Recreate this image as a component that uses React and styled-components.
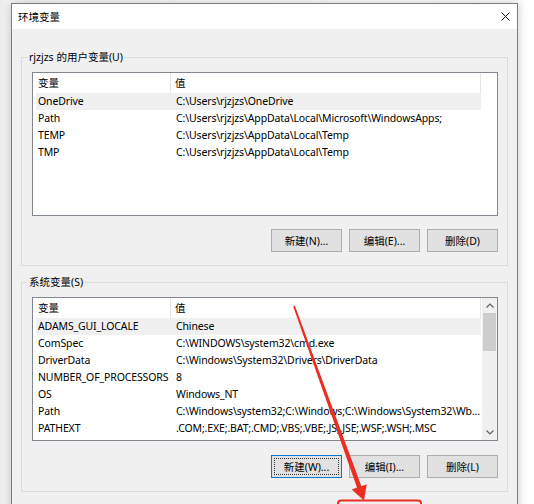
import styled, { createGlobalStyle } from 'styled-components';

const GlobalStyle = createGlobalStyle`
  html, body {
    margin: 0;
    padding: 0;
    background: #f7f7f7;
  }
  body {
    font-family: "Noto Sans", "Noto Sans CJK SC", sans-serif;
    font-size: 10.5px;
    color: #000;
  }
`;

const Page = styled.div`
  position: relative;
  width: 534px;
  height: 504px;
  overflow: hidden;
  background: linear-gradient(90deg, #ececec 0, #f6f6f6 11px, #fff 100%);
`;

const Window = styled.div`
  margin: 3px 0 0 11px;
  width: 507px;
  min-height: 520px;
  box-sizing: border-box;
  border: 1px solid #7d7d7d;
  background: #f0f0f0;
  box-shadow: 0 0 9px rgba(0, 0, 0, 0.22);
`;

const TitleBar = styled.div`
  height: 25px;
  background: #fff;
  display: flex;
  align-items: center;
  justify-content: space-between;
  padding: 0 7px 0 6px;
  font-size: 10.5px;
`;

const CloseIcon = styled.svg`
  width: 9px;
  height: 9px;
`;

const Body = styled.div`
  padding: 20px 9px 0 9px;
  display: flex;
  flex-direction: column;
  gap: 8px;
`;

const Group = styled.fieldset`
  margin: 0;
  padding: 7px 9px 13px 10px;
  border: 1px solid #dcdcdc;
  min-width: 0;
  display: flex;
  flex-direction: column;
  gap: ${(p) => p.$gap || 13}px;
`;

const Legend = styled.legend`
  padding: 0 2px;
  margin-left: -5px;
  line-height: 16px;
  font-size: 10.5px;
`;

const List = styled.div`
  height: 144px;
  box-sizing: border-box;
  border: 1px solid #828790;
  background: #fff;
  display: flex;
  overflow: hidden;
`;

const ListContent = styled.div`
  flex: 1;
  min-width: 0;
`;

const HeaderRow = styled.div`
  display: grid;
  grid-template-columns: 138px 310px 1fr;
  height: 20px;
`;

const HeaderCell = styled.div`
  padding-left: ${(p) => p.$pad}px;
  line-height: 21px;
  border-right: ${(p) => (p.$last ? 'none' : '1px solid #e5e5e5')};
`;

const Row = styled.div`
  display: grid;
  grid-template-columns: 135px 310px;
  margin-left: 3px;
  width: 445px;
  height: 17px;
  line-height: 17px;
  background: ${(p) => (p.$selected ? '#f0f0f0' : 'transparent')};
`;

const Cell = styled.div`
  padding-left: ${(p) => p.$pad}px;
  white-space: nowrap;
  overflow: hidden;
  text-overflow: ellipsis;
  letter-spacing: -0.13px;
`;

const ScrollBar = styled.div`
  width: 15px;
  flex: none;
  background: #f0f0f0;
  display: flex;
  flex-direction: column;
`;

const ScrollArrow = styled.div`
  height: 15px;
  display: flex;
  align-items: center;
  justify-content: center;
`;

const ScrollTrack = styled.div`
  flex: 1;
  display: flex;
  flex-direction: column;
`;

const Thumb = styled.div`
  height: 38px;
  background: #cdcdcd;
  margin: 0 1px;
`;

const ButtonRow = styled.div`
  display: flex;
  justify-content: flex-end;
  gap: 7px;
`;

const Button = styled.button`
  width: 71px;
  height: 23px;
  box-sizing: border-box;
  padding: 0;
  font-family: inherit;
  font-size: 10.5px;
  color: #000;
  background: #e1e1e1;
  border: 1px solid ${(p) => (p.$focused ? '#0078d7' : '#adadad')};
  outline: ${(p) => (p.$focused ? '1px dotted #333' : 'none')};
  outline-offset: -4px;
`;

const Annotation = styled.svg`
  position: absolute;
  left: 0;
  top: 0;
  width: 534px;
  height: 504px;
  pointer-events: none;
`;

const userVars = [
  ['OneDrive', 'C:\\Users\\rjzjzs\\OneDrive'],
  ['Path', 'C:\\Users\\rjzjzs\\AppData\\Local\\Microsoft\\WindowsApps;'],
  ['TEMP', 'C:\\Users\\rjzjzs\\AppData\\Local\\Temp'],
  ['TMP', 'C:\\Users\\rjzjzs\\AppData\\Local\\Temp'],
];

const systemVars = [
  ['ADAMS_GUI_LOCALE', 'Chinese'],
  ['ComSpec', 'C:\\WINDOWS\\system32\\cmd.exe'],
  ['DriverData', 'C:\\Windows\\System32\\Drivers\\DriverData'],
  ['NUMBER_OF_PROCESSORS', '8'],
  ['OS', 'Windows_NT'],
  ['Path', 'C:\\Windows\\system32;C:\\Windows;C:\\Windows\\System32\\Wb...'],
  ['PATHEXT', '.COM;.EXE;.BAT;.CMD;.VBS;.VBE;.JS;.JSE;.WSF;.WSH;.MSC'],
];

const Chevron = ({ up }) => (
  <svg width="8" height="5" viewBox="0 0 8 5">
    <path
      d={up ? 'M0.5 4.5 L4 1 L7.5 4.5' : 'M0.5 0.5 L4 4 L7.5 0.5'}
      fill="none"
      stroke="#606060"
      strokeWidth="1.2"
    />
  </svg>
);

const VarList = ({ rows, scroll }) => (
  <List>
    <ListContent>
      <HeaderRow>
        <HeaderCell $pad={5}>变量</HeaderCell>
        <HeaderCell $pad={4}>值</HeaderCell>
        <HeaderCell $last />
      </HeaderRow>
      {rows.map(([name, value], i) => (
        <Row key={name + i} $selected={i === 0}>
          <Cell $pad={2}>{name}</Cell>
          <Cell $pad={5}>{value}</Cell>
        </Row>
      ))}
    </ListContent>
    {scroll && (
      <ScrollBar>
        <ScrollArrow>
          <Chevron up />
        </ScrollArrow>
        <ScrollTrack>
          <Thumb />
        </ScrollTrack>
        <ScrollArrow>
          <Chevron />
        </ScrollArrow>
      </ScrollBar>
    )}
  </List>
);

export default function App() {
  return (
    <>
      <GlobalStyle />
      <Page>
        <Window>
          <TitleBar>
            <span>环境变量</span>
            <CloseIcon viewBox="0 0 9 9">
              <path d="M0.5 0.5 L8.5 8.5 M8.5 0.5 L0.5 8.5" stroke="#111" strokeWidth="1" />
            </CloseIcon>
          </TitleBar>
          <Body>
            <Group>
              <Legend>rjzjzs 的用户变量(U)</Legend>
              <VarList rows={userVars} />
              <ButtonRow>
                <Button>新建(N)...</Button>
                <Button>编辑(E)...</Button>
                <Button>删除(D)</Button>
              </ButtonRow>
            </Group>
            <Group $gap={14}>
              <Legend>系统变量(S)</Legend>
              <VarList rows={systemVars} scroll />
              <ButtonRow>
                <Button $focused>新建(W)...</Button>
                <Button>编辑(I)...</Button>
                <Button>删除(L)</Button>
              </ButtonRow>
            </Group>
          </Body>
        </Window>
        <Annotation viewBox="0 0 534 504">
          <polygon
            points="294.8,305.6 361.4,486.2 366.8,484.2 363.9,500.5 351.8,489.5 357.0,487.6 293.2,306.4"
            fill="#ec2d22"
          />
          <rect x="338" y="500.5" width="83" height="12" rx="3" fill="none" stroke="#ec2d22" strokeWidth="2" />
        </Annotation>
      </Page>
    </>
  );
}
